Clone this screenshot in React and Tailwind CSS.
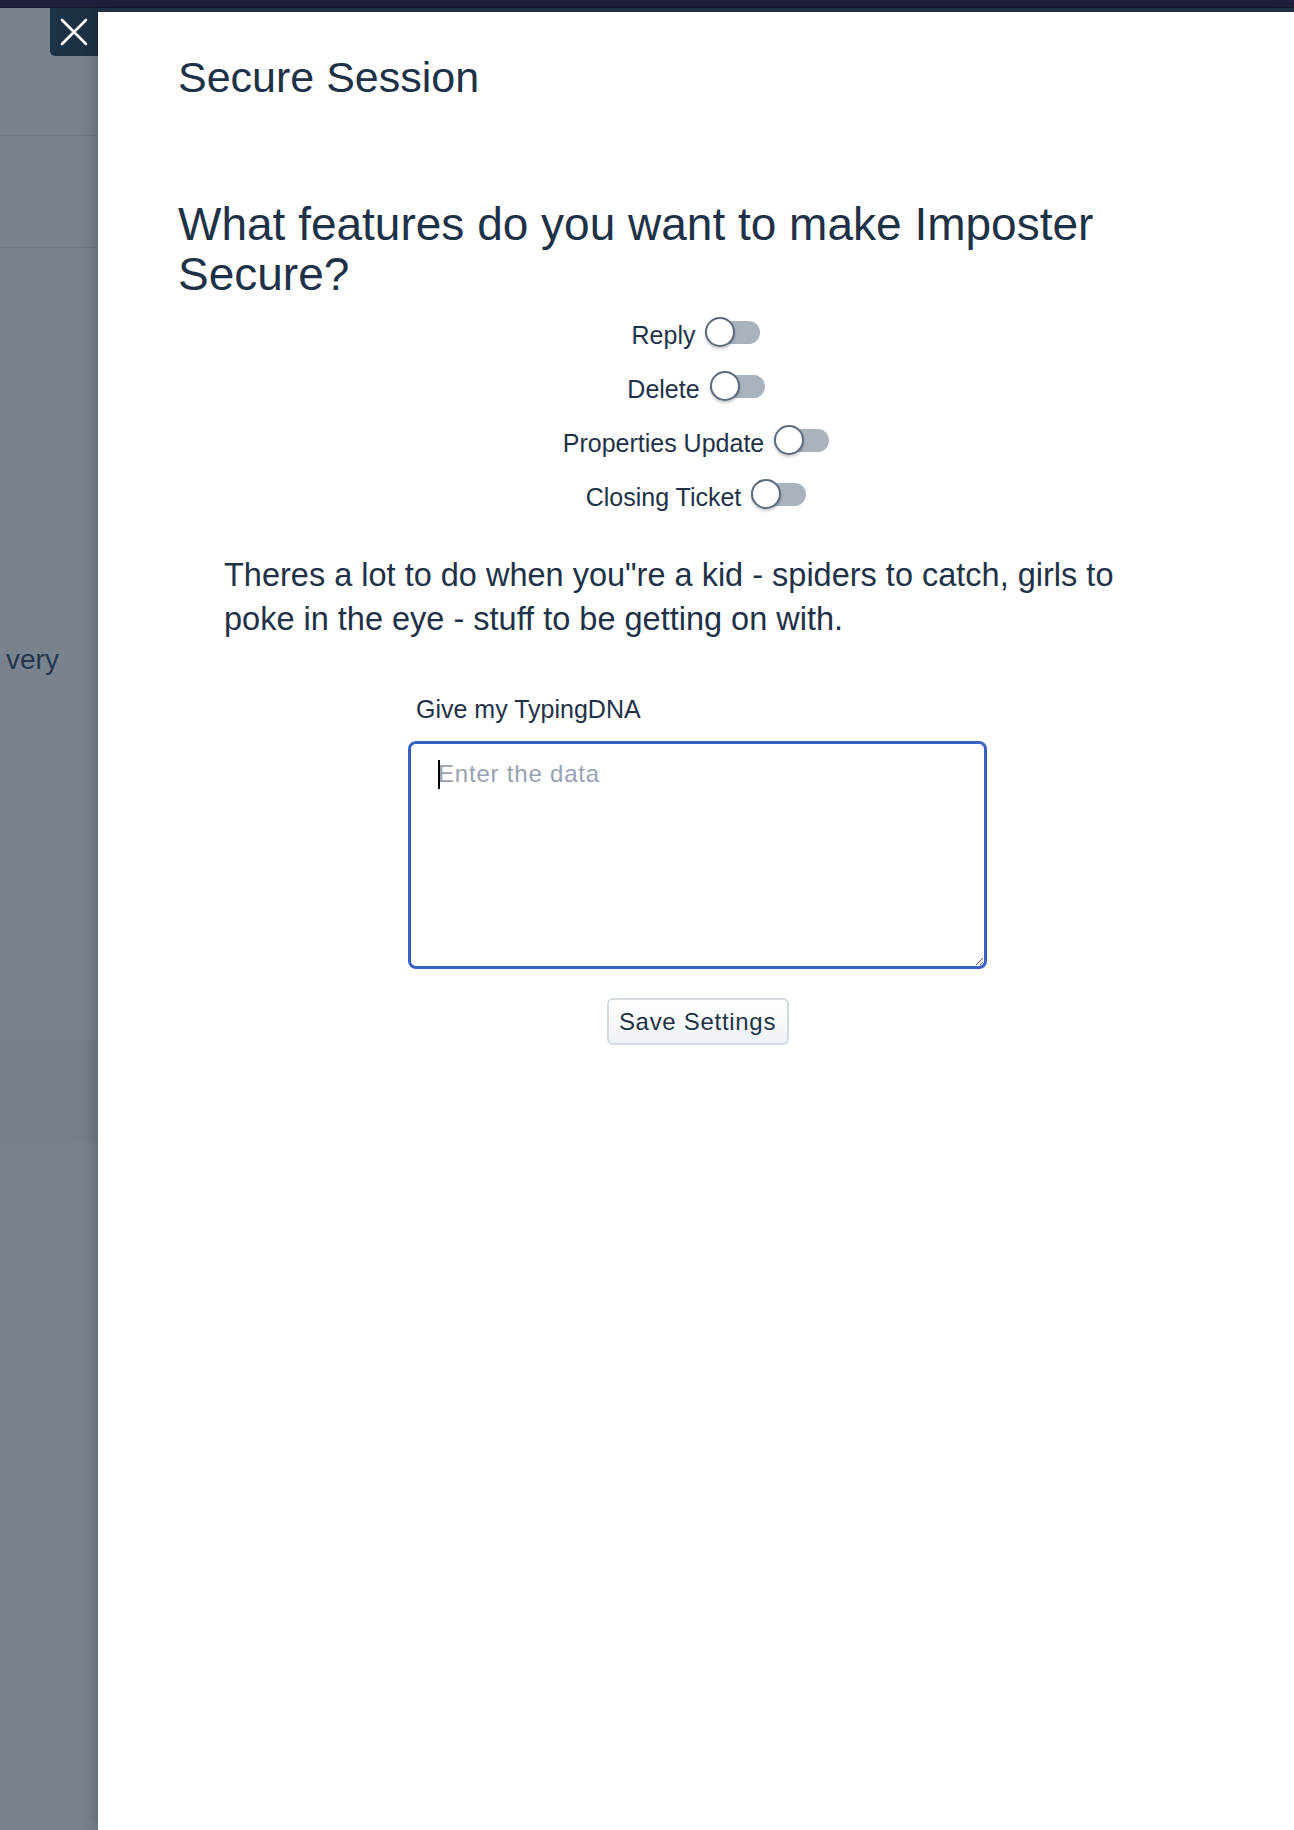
import React from "react";

function Toggle() {
  return (
    <div className="relative w-[55px] h-[30px] shrink-0 mb-[6px]">
      <div className="absolute left-0 right-0 top-[4px] h-[23px] rounded-full bg-[#a9b3bd]" />
      <div className="absolute left-0 top-0 w-[30px] h-[30px] rounded-full bg-white border-2 border-[#5c6c80] shadow-[0_2px_3px_rgba(0,0,0,0.22)]" />
    </div>
  );
}

function Row({ label }) {
  return (
    <div className="h-[54px] flex items-center gap-[10px]">
      <span className="text-[25px] leading-[54px] text-[#1e3247]">{label}</span>
      <Toggle />
    </div>
  );
}

export default function App() {
  return (
    <div className="min-h-[1830px] w-full flex flex-col bg-white font-['Liberation_Sans',Arial,sans-serif] text-[#1e3247]">
      <div className="h-[8px] bg-[#1f1f3f] border-b border-[#191933]" />
      <div className="flex flex-1">
        <div className="relative w-[98px] shrink-0 bg-[#79838f] flex flex-col">
          <div className="h-[128px] border-b border-[#717b87]" />
          <div className="h-[112px] border-b border-[#717b87]" />
          <div className="mt-[396px] pl-[6px] text-[28px] leading-[32px] text-[#23374d]">very</div>
          <div className="mt-[364px] h-[103px] bg-[#76808c]" />
          <button className="absolute top-0 right-0 w-[48px] h-[48px] bg-[#1e3246] rounded-bl-[5px] flex items-center justify-center">
            <svg width="28" height="28" viewBox="0 0 28 28" fill="none" stroke="white" strokeWidth="2.6" strokeLinecap="round">
              <line x1="2" y1="2" x2="26" y2="26" />
              <line x1="26" y1="2" x2="2" y2="26" />
            </svg>
          </button>
        </div>
        <div className="relative z-10 flex-1 bg-white border-t-[4px] border-[#1e3246] shadow-[-6px_0_14px_rgba(0,0,0,0.18)] px-[80px]">
          <h1 className="mt-[40px] text-[43px] leading-[50px] font-normal">Secure Session</h1>
          <h2 className="mt-[97px] text-[46px] leading-[50px] font-normal">
            What features do you want to make Imposter Secure?
          </h2>
          <div className="mt-[9px] flex flex-col items-center">
            <Row label="Reply" />
            <Row label="Delete" />
            <Row label="Properties Update" />
            <Row label="Closing Ticket" />
          </div>
          <p className="mt-[29px] ml-[46px] mr-[42px] text-[32.5px] leading-[44px]">
            Theres a lot to do when you"re a kid - spiders to catch, girls to poke in the eye - stuff to be getting on with.
          </p>
          <div className="mt-[53px] ml-[230px] w-[579px]">
            <label className="block pl-[8px] text-[25px] leading-[30px] font-medium">Give my TypingDNA</label>
            <div className="relative mt-[17px]">
              <textarea
                className="block w-full h-[228px] border-[3px] border-[#3a62c4] rounded-[8px] pt-[12px] pl-[27px] pr-[12px] text-[24px] leading-[36px] tracking-[0.8px] text-[#1e3247] placeholder:text-[#97a3b4] outline-none"
                placeholder="Enter the data"
              />
              <div className="absolute left-[30px] top-[19px] w-[2px] h-[29px] bg-black pointer-events-none" />
            </div>
            <button className="mt-[29px] mx-auto block w-[182px] h-[47px] border-2 border-[#d3d9e1] rounded-[6px] bg-gradient-to-b from-white to-[#eef2f6] text-[24px] tracking-[0.7px] text-[#1e3247]">
              Save Settings
            </button>
          </div>
        </div>
      </div>
    </div>
  );
}
